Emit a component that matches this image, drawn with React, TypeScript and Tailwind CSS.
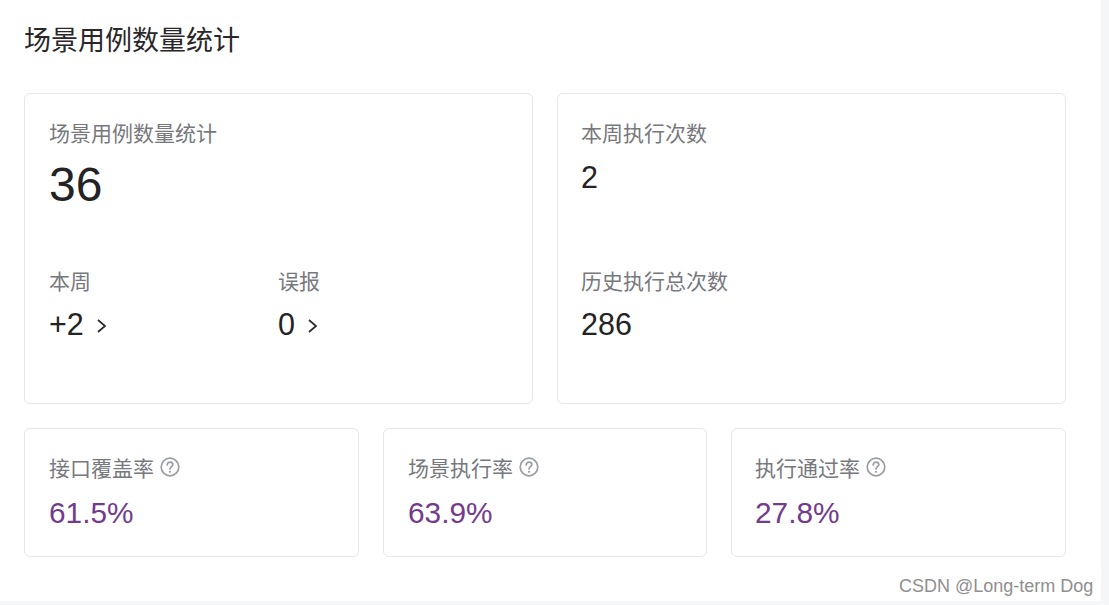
import React from "react";

const font = { fontFamily: '"Liberation Sans", "Noto Sans CJK SC", sans-serif' };

function Chevron() {
  return (
    <svg width="12" height="16" viewBox="0 0 12 16" fill="none" stroke="#2a2a2e" strokeWidth="1.7" className="ml-[12px] mt-[3px]">
      <path d="M2 2 L9 8 L2 14" />
    </svg>
  );
}

function Help() {
  return (
    <svg width="20" height="20" viewBox="0 0 20 20" fill="none" className="ml-[6px] mt-[-4px]">
      <circle cx="10" cy="10" r="8.8" stroke="#9a9da3" strokeWidth="1.7" />
      <path d="M7.2 8 C7.2 6.2 8.5 5.2 10 5.2 C11.6 5.2 12.8 6.3 12.8 7.7 C12.8 9.6 10 9.8 10 12" stroke="#9a9da3" strokeWidth="1.7" strokeLinecap="round" />
      <circle cx="10" cy="14.8" r="1.1" fill="#9a9da3" />
    </svg>
  );
}

function Rate({ label, value, className, pad }: { label: string; value: string; className: string; pad: string }) {
  return (
    <div className={`h-[129px] rounded-[6px] border border-[#e6e7ea] bg-white pt-[26px] ${pad} ${className}`}>
      <div className="flex items-center text-[21px] leading-[28px] text-[#77787d]">
        <span>{label}</span>
        <Help />
      </div>
      <div className="mt-[12px] text-[29.8px] leading-[36px] text-[#733b8c]">{value}</div>
    </div>
  );
}

export default function App() {
  return (
    <div className="relative h-[605px] w-[1109px] overflow-hidden bg-[#f5f6f8]" style={font}>
      <div className="h-[601px] w-[1101px] bg-white px-[24px] pt-[23px]">
        <h1 className="text-[27px] font-normal leading-[36px] text-[#2b2729]">场景用例数量统计</h1>
        <div className="mt-[34px] flex w-[1042px] gap-[24px]">
          <div className="h-[311px] w-[509px] rounded-[6px] border border-[#e6e7ea] bg-white pl-[24px] pt-[26px]">
            <div className="text-[21px] leading-[28px] text-[#77787d]">场景用例数量统计</div>
            <div className="mt-[9px] text-[48px] leading-[56px] text-[#232326]">36</div>
            <div className="mt-[55px] flex">
              <div className="w-[229px]">
                <div className="text-[21px] leading-[28px] text-[#77787d]">本周</div>
                <div className="mt-[10px] flex items-center text-[30.5px] leading-[36px] text-[#232326]">
                  +2
                  <Chevron />
                </div>
              </div>
              <div>
                <div className="text-[21px] leading-[28px] text-[#77787d]">误报</div>
                <div className="mt-[10px] flex items-center text-[30.5px] leading-[36px] text-[#232326]">
                  0
                  <Chevron />
                </div>
              </div>
            </div>
          </div>
          <div className="h-[311px] w-[509px] rounded-[6px] border border-[#e6e7ea] bg-white pl-[23px] pt-[26px]">
            <div className="text-[21px] leading-[28px] text-[#77787d]">本周执行次数</div>
            <div className="mt-[11px] text-[30.5px] leading-[36px] text-[#232326]">2</div>
            <div className="mt-[73px] text-[21px] leading-[28px] text-[#77787d]">历史执行总次数</div>
            <div className="mt-[10px] text-[30.5px] leading-[36px] text-[#232326]">286</div>
          </div>
        </div>
        <div className="mt-[24px] flex w-[1042px] gap-[24px]">
          <Rate label="接口覆盖率" value="61.5%" className="w-[335px]" pad="pl-[24px]" />
          <Rate label="场景执行率" value="63.9%" className="w-[324px]" pad="pl-[24px]" />
          <Rate label="执行通过率" value="27.8%" className="w-[335px]" pad="pl-[23px]" />
        </div>
      </div>
      <div className="absolute left-[899px] top-[575px] text-[18px] leading-[22px] text-[#8f8f8f]">
        CSDN @Long-term Dog
      </div>
    </div>
  );
}
